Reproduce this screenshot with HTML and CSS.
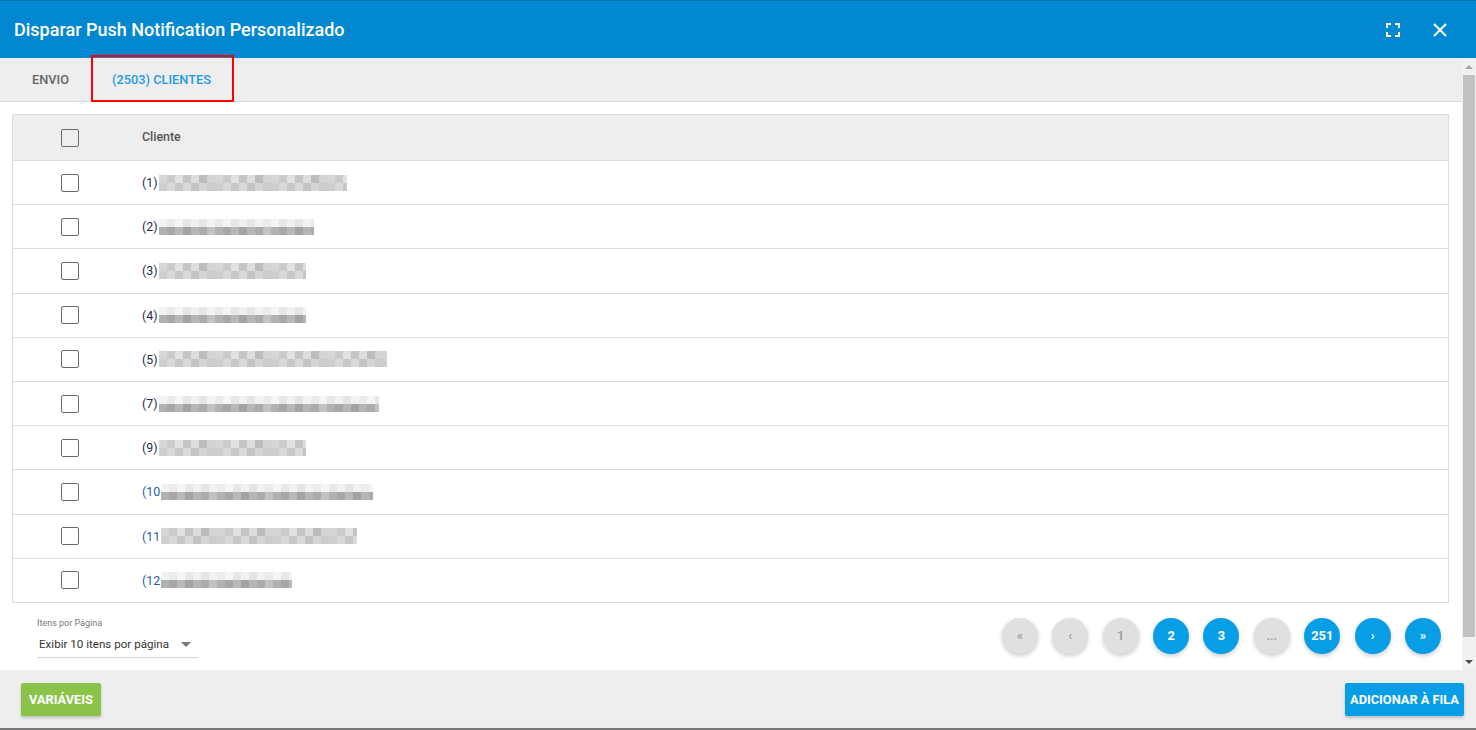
FILE: index.html
```html
<!DOCTYPE html>
<html lang="pt-BR">
<head>
<meta charset="utf-8">
<title>Disparar Push Notification Personalizado</title>
<link rel="stylesheet" href="styles.css">
</head>
<body>
<div class="modal">
  <header class="modal-header">
    <h1 class="modal-title">Disparar Push Notification Personalizado</h1>
    <div class="header-actions">
      <button class="icon-btn" aria-label="Tela cheia">
        <svg width="14" height="14" viewBox="0 0 14 14" fill="none" stroke="#fff" stroke-width="2">
          <path d="M1 5V1h4M9 1h4v4M13 9v4H9M5 13H1V9"/>
        </svg>
      </button>
      <button class="icon-btn" aria-label="Fechar">
        <svg width="14" height="14" viewBox="0 0 14 14" fill="none" stroke="#fff" stroke-width="2">
          <path d="M1 1l12 12M13 1L1 13"/>
        </svg>
      </button>
    </div>
  </header>

  <div class="modal-body">
    <div class="content">
      <nav class="tabs">
        <span class="tab">ENVIO</span>
        <span class="tab active">(2503) CLIENTES</span>
      </nav>

      <div class="panel">
        <div class="grid">
          <div class="grid-row head">
            <div class="cell-check"><span class="checkbox"></span></div>
            <div class="cell-name">Cliente</div>
          </div>
          <div class="grid-row"><div class="cell-check"><span class="checkbox"></span></div><div class="cell-name"><span class="num">(1)</span><span class="blur light" style="width:188px"></span></div></div>
          <div class="grid-row"><div class="cell-check"><span class="checkbox"></span></div><div class="cell-name"><span class="num">(2)</span><span class="blur dark" style="width:155px"></span></div></div>
          <div class="grid-row"><div class="cell-check"><span class="checkbox"></span></div><div class="cell-name"><span class="num">(3)</span><span class="blur light" style="width:147px"></span></div></div>
          <div class="grid-row"><div class="cell-check"><span class="checkbox"></span></div><div class="cell-name"><span class="num">(4)</span><span class="blur dark" style="width:147px"></span></div></div>
          <div class="grid-row"><div class="cell-check"><span class="checkbox"></span></div><div class="cell-name"><span class="num">(5)</span><span class="blur light" style="width:228px"></span></div></div>
          <div class="grid-row"><div class="cell-check"><span class="checkbox"></span></div><div class="cell-name"><span class="num">(7)</span><span class="blur dark" style="width:220px"></span></div></div>
          <div class="grid-row"><div class="cell-check"><span class="checkbox"></span></div><div class="cell-name"><span class="num">(9)</span><span class="blur light" style="width:147px"></span></div></div>
          <div class="grid-row"><div class="cell-check"><span class="checkbox"></span></div><div class="cell-name"><span class="num link">(10</span><span class="blur dark" style="width:212px"></span></div></div>
          <div class="grid-row"><div class="cell-check"><span class="checkbox"></span></div><div class="cell-name"><span class="num link">(11</span><span class="blur light" style="width:196px"></span></div></div>
          <div class="grid-row"><div class="cell-check"><span class="checkbox"></span></div><div class="cell-name"><span class="num link">(12</span><span class="blur dark" style="width:131px"></span></div></div>
        </div>

        <div class="pager-bar">
          <div class="per-page">
            <label class="per-page-label">Itens por Página</label>
            <div class="select">
              <span>Exibir 10 itens por página</span>
              <span class="caret"></span>
            </div>
          </div>
          <div class="pagination">
            <span class="page off">&laquo;</span>
            <span class="page off">&lsaquo;</span>
            <span class="page off">1</span>
            <span class="page on">2</span>
            <span class="page on">3</span>
            <span class="page off">...</span>
            <span class="page on">251</span>
            <span class="page on">&rsaquo;</span>
            <span class="page on">&raquo;</span>
          </div>
        </div>
      </div>
    </div>

    <div class="scrollbar">
      <span class="arrow up"></span>
      <div class="track"><div class="thumb"></div></div>
      <span class="arrow down"></span>
    </div>
  </div>

  <footer class="modal-footer">
    <button class="btn green">VARIÁVEIS</button>
    <button class="btn blue">ADICIONAR À FILA</button>
  </footer>

  <div class="highlight"></div>
</div>
</body>
</html>
```

FILE: styles.css
```css
* { box-sizing: border-box; }

html, body {
  margin: 0;
  padding: 0;
  width: 1476px;
  height: 730px;
  overflow: hidden;
  font-family: Roboto, "Liberation Sans", Arial, sans-serif;
  background: #fff;
}

.modal {
  position: relative;
  width: 1476px;
  height: 730px;
  display: flex;
  flex-direction: column;
}

.modal-header {
  height: 58px;
  flex: none;
  background: #0288d1;
  border-top: 1px solid #0a6fa8;
  display: flex;
  align-items: center;
  justify-content: space-between;
  padding: 0 29px 0 14px;
}

.modal-title {
  margin: 0;
  color: #fff;
  font-size: 18px;
  font-weight: 500;
  letter-spacing: 0;
}

.header-actions {
  display: flex;
  gap: 33px;
  align-items: center;
}

.icon-btn {
  background: none;
  border: 0;
  padding: 0;
  width: 14px;
  height: 14px;
  display: flex;
  cursor: pointer;
}

.modal-body {
  flex: 1;
  display: flex;
  min-height: 0;
  background: #fff;
}

.content {
  flex: 1;
  display: flex;
  flex-direction: column;
}

.tabs {
  height: 44px;
  flex: none;
  background: #eeeeee;
  border-bottom: 1px solid #dcdcdc;
  display: flex;
  align-items: center;
  padding-left: 32px;
  gap: 43px;
}

.tab {
  font-size: 12.8px;
  font-weight: 500;
  color: #666;
}

.tab.active { color: #1e9be4; }

.panel {
  padding: 12px 13px 0 12px;
}

.grid {
  border: 1px solid #dddddd;
  border-bottom: 0;
}

.grid-row {
  display: flex;
  align-items: center;
  height: 44.2px;
  border-bottom: 1px solid #dddddd;
}

.grid-row.head {
  height: 46px;
  background: #eeeeee;
}

.cell-check {
  width: 113px;
  flex: none;
  display: flex;
  justify-content: center;
}

.checkbox {
  width: 18px;
  height: 18px;
  border: 1.5px solid #6b6b6b;
  border-radius: 2px;
  background: #fff;
}

.head .checkbox { background: transparent; }

.cell-name {
  padding-left: 16px;
  font-size: 12.4px;
  display: flex;
  align-items: center;
  color: #222;
}

.head .cell-name {
  font-weight: 500;
  color: #555;
  padding-bottom: 2px;
}

.num { color: #1f2f45; }
.num.link { color: #1f5ea8; }

.blur {
  display: inline-block;
  height: 16px;
  margin-left: 1px;
  background:
    repeating-linear-gradient(90deg, #d8d6d5 0 8px, #cbcacd 8px 16px, #e2e1e0 16px 24px, #c6c4c5 24px 32px, #dedcdc 32px 40px, #bdbbbd 40px 48px, #d3d3d6 48px 56px) top / 100% 8px no-repeat,
    repeating-linear-gradient(90deg, #cfcdcd 0 8px, #d9d9dc 8px 16px, #c8c7c7 16px 24px, #dcdad9 24px 32px, #c4c3c6 32px 40px, #d6d5d5 40px 48px, #cdcbcb 48px 56px) bottom / 100% 8px no-repeat;
}

.blur.dark {
  background:
    repeating-linear-gradient(90deg, #f3f2f2 0 8px, #ebebeb 8px 16px, #f5f5f5 16px 24px, #e8e7e7 24px 32px, #f1f1f1 32px 40px, #e5e5e6 40px 48px) top / 100% 8px no-repeat,
    repeating-linear-gradient(90deg, #b3b1b1 0 8px, #a7a6a9 8px 16px, #b9b8b8 16px 24px, #a3a2a4 24px 32px, #b6b5b7 32px 40px, #acabab 40px 48px, #c2c1c3 48px 56px) bottom / 100% 8px no-repeat;
}

.pager-bar {
  display: flex;
  justify-content: space-between;
  align-items: flex-start;
  padding: 15px 8px 0 25px;
}

.per-page {
  width: 161px;
  display: flex;
  flex-direction: column;
}

.per-page-label {
  font-size: 9px;
  color: #777;
  line-height: 11px;
}

.select {
  margin-top: 6px;
  height: 23px;
  border-bottom: 1px solid #d6d6d6;
  display: flex;
  align-items: center;
  justify-content: space-between;
  font-size: 11.6px;
  color: #333;
  padding: 0 7px 3px 2px;
}

.caret {
  width: 0;
  height: 0;
  border-left: 5px solid transparent;
  border-right: 5px solid transparent;
  border-top: 5px solid #777;
}

.pagination {
  display: flex;
  gap: 14.4px;
}

.page {
  width: 36px;
  height: 36px;
  border-radius: 50%;
  display: flex;
  align-items: center;
  justify-content: center;
  font-size: 12.8px;
  font-weight: 500;
  box-shadow: 0 2px 4px rgba(0,0,0,0.2);
}

.page.off {
  background: #e0e0e0;
  color: #9a9a9a;
}

.page.on {
  background: #089ee6;
  color: #fff;
  font-weight: 700;
}

.scrollbar {
  width: 14px;
  flex: none;
  background: #f1f1f1;
  display: flex;
  flex-direction: column;
  align-items: center;
}

.arrow {
  height: 17px;
  flex: none;
  display: flex;
  align-items: center;
  justify-content: center;
}

.arrow::before {
  content: "";
  border-left: 4px solid transparent;
  border-right: 4px solid transparent;
}

.arrow.up::before { border-bottom: 4px solid #a3a3a3; }
.arrow.down::before { border-top: 4px solid #505050; }

.track {
  flex: 1;
  width: 100%;
  padding: 0 1px;
}

.thumb {
  height: 562px;
  background: #c1c1c1;
}

.modal-footer {
  height: 60px;
  flex: none;
  background: #eeeeee;
  border-bottom: 2px solid #777;
  display: flex;
  align-items: flex-start;
  justify-content: space-between;
  padding: 13px 12px 0 21px;
}

.btn {
  height: 33px;
  border: 0;
  border-radius: 2px;
  color: #fff;
  font-family: inherit;
  font-size: 12.8px;
  font-weight: 700;
  padding: 0 6px;
  box-shadow: 0 2px 3px rgba(0,0,0,0.2);
}

.btn.green { background: #8bc34a; width: 80px; }
.btn.blue { background: #089ee6; width: 119px; padding: 0 2px; }

.highlight {
  position: absolute;
  left: 91px;
  top: 55px;
  width: 143px;
  height: 47px;
  border: 2px solid #f00;
}
```
